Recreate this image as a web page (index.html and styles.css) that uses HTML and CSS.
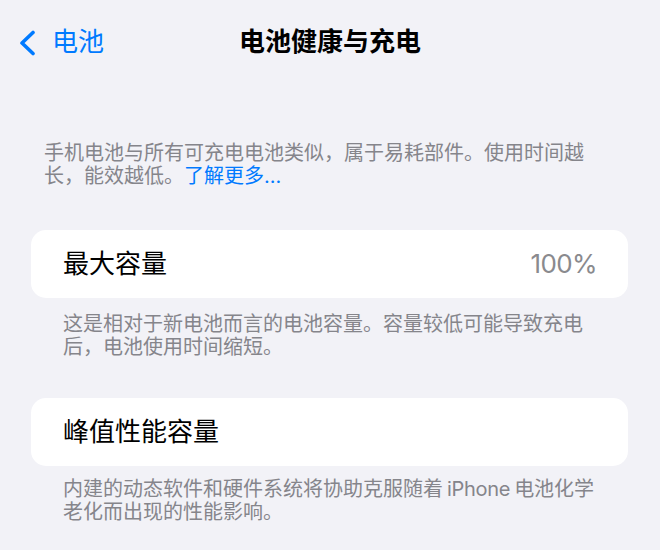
FILE: index.html
```html
<!DOCTYPE html>
<html lang="zh-CN">
<head>
<meta charset="utf-8">
<title>电池健康与充电</title>
<link rel="stylesheet" href="styles.css">
</head>
<body>
  <header class="nav">
    <a class="back" href="#">
      <svg class="chev" width="17" height="26" viewBox="0 0 17 26" aria-hidden="true">
        <polyline points="14,2.5 3,13 14,23.5" fill="none" stroke="#007aff" stroke-width="3.6" stroke-linecap="round" stroke-linejoin="round"/>
      </svg>
      <span class="back-label">电池</span>
    </a>
    <h1 class="title">电池健康与充电</h1>
    <div class="nav-spacer"></div>
  </header>

  <main class="content">
    <p class="intro">手机电池与所有可充电电池类似，属于易耗部件。使用时间越长，能效越低。<a class="link" href="#">了解更多...</a></p>

    <section class="group group-first">
      <div class="card">
        <span class="label">最大容量</span>
        <span class="value">100%</span>
      </div>
      <p class="footer footer-first">这是相对于新电池而言的电池容量。容量较低可能导致充电后，电池使用时间缩短。</p>
    </section>

    <section class="group group-second">
      <div class="card">
        <span class="label">峰值性能容量</span>
      </div>
      <p class="footer footer-second">内建的动态软件和硬件系统将协助克服随着<span class="latin">iPhone</span>电池化学老化而出现的性能影响。</p>
    </section>
  </main>
</body>
</html>
```

FILE: styles.css
```css
html, body {
  margin: 0;
  padding: 0;
}

body {
  background: #f2f2f7;
  font-family: "Inter", "Noto Sans CJK SC", sans-serif;
  color: #000;
  width: 660px;
  height: 550px;
  overflow: hidden;
}

.nav {
  height: 84px;
  display: grid;
  grid-template-columns: 1fr auto 1fr;
  align-items: center;
}

.back {
  display: flex;
  align-items: center;
  gap: 16px;
  padding-left: 19px;
  color: #007aff;
  text-decoration: none;
  font-size: 26px;
  line-height: 30px;
}

.chev {
  display: block;
  margin-top: 2px;
}

.back-label {
  display: block;
}

.title {
  margin: 0;
  font-size: 26px;
  line-height: 30px;
  font-weight: 700;
  color: #000;
  text-align: center;
}

.content {
  display: block;
}

.intro {
  margin: 58px 0 0;
  padding: 0 63px 0 44px;
  font-size: 20px;
  line-height: 23px;
  color: #85858b;
}

.link {
  color: #007aff;
  text-decoration: none;
}

.group-first {
  margin-top: 42px;
}

.group-second {
  margin-top: 39px;
}

.card {
  margin: 0 32px 0 31px;
  height: 68px;
  border-radius: 15px;
  background: #fff;
  padding: 0 31px 0 32px;
  display: flex;
  align-items: center;
  justify-content: space-between;
  font-size: 26px;
  line-height: 30px;
}

.label {
  color: #000;
}

.value {
  color: #8a8a8e;
  letter-spacing: -0.6px;
}

.footer {
  margin: 0;
  padding: 0 63px;
  font-size: 20px;
  line-height: 23px;
  color: #85858b;
}

.footer-first {
  margin-top: 15px;
}

.footer-second {
  margin-top: 12px;
}

.latin {
  margin: 0 4px;
  letter-spacing: -0.3px;
}
```
